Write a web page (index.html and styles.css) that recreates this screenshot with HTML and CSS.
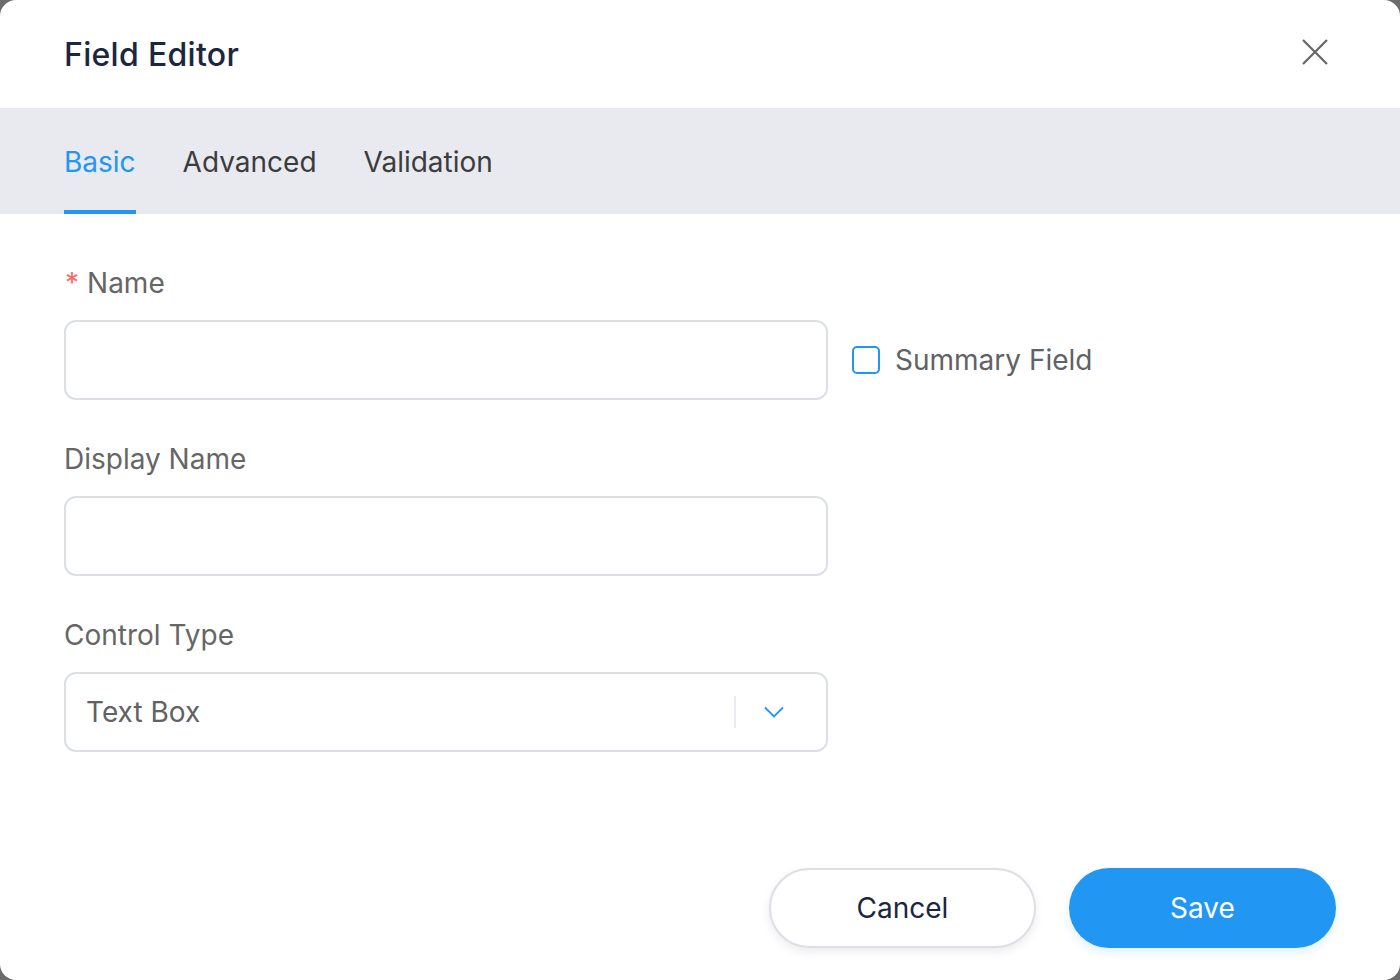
FILE: index.html
```html
<!DOCTYPE html>
<html lang="en">
<head>
    <meta charset="utf-8">
    <title>Field Editor</title>
    <link rel="stylesheet" href="styles.css">
</head>
<body>
    <div class="dialog">
        <div class="dialog-header">
            <h2 class="dialog-title">Field Editor</h2>
            <button class="close-btn" type="button" aria-label="Close">
                <svg width="26" height="26" viewBox="0 0 26 26">
                    <path d="M1 1 L25 25 M25 1 L1 25" stroke="#666" stroke-width="2.2" fill="none"/>
                </svg>
            </button>
        </div>
        <div class="tabs">
            <div class="tab active">Basic</div>
            <div class="tab">Advanced</div>
            <div class="tab">Validation</div>
        </div>
        <div class="dialog-body">
            <div class="form-item">
                <label class="form-label"><span class="required">*</span>Name</label>
                <div class="form-row">
                    <input class="input" type="text">
                    <label class="checkbox">
                        <span class="checkbox-box"></span>
                        <span>Summary Field</span>
                    </label>
                </div>
            </div>
            <div class="form-item">
                <label class="form-label">Display Name</label>
                <div class="form-row">
                    <input class="input" type="text">
                </div>
            </div>
            <div class="form-item">
                <label class="form-label">Control Type</label>
                <div class="form-row">
                    <div class="select">
                        <span class="select-value">Text Box</span>
                        <span class="select-divider"></span>
                        <span class="select-arrow">
                            <svg width="20" height="13" viewBox="0 0 20 13">
                                <path d="M1 1.5 L10 10.5 L19 1.5" stroke="#2196f3" stroke-width="1.8" fill="none"/>
                            </svg>
                        </span>
                    </div>
                </div>
            </div>
        </div>
        <div class="dialog-footer">
            <button class="btn btn-cancel" type="button">Cancel</button>
            <button class="btn btn-save" type="button">Save</button>
        </div>
    </div>
</body>
</html>
```

FILE: styles.css
```css
html, body {
    margin: 0;
    height: 100%;
}
body {
    background-color: #6b6b6b;
    font-family: Inter, "Noto Sans", "Liberation Sans", sans-serif;
}
.dialog {
    width: 1400px;
    height: 980px;
    background-color: #fff;
    border-radius: 16px;
    display: flex;
    flex-direction: column;
    overflow: hidden;
}
.dialog-header {
    height: 108px;
    display: flex;
    align-items: center;
    justify-content: space-between;
    padding: 0 72px 0 64px;
    box-sizing: border-box;
}
.dialog-title {
    margin: 0;
    font-size: 32px;
    font-weight: 500;
    color: #1b2640;
    letter-spacing: 0.3px;
}
.close-btn {
    border: none;
    background: none;
    padding: 0;
    width: 26px;
    height: 26px;
    margin-bottom: 4px;
    cursor: pointer;
}
.close-btn svg {
    display: block;
}
.tabs {
    height: 106px;
    background-color: #e8eaf0;
    display: flex;
    gap: 47px;
    padding: 0 64px;
}
.tab {
    font-size: 28px;
    color: #3c3c3c;
    display: flex;
    align-items: center;
    border-bottom: 4px solid transparent;
    padding-top: 6px;
}
.tab.active {
    color: #2196f3;
    border-bottom-color: #2196f3;
}
.dialog-body {
    padding: 48px 64px 0;
}
.form-item {
    margin-bottom: 38px;
}
.form-label {
    display: block;
    height: 40px;
    line-height: 42px;
    font-size: 28px;
    color: #666;
    margin-bottom: 18px;
}
.required {
    color: #f56c6c;
    margin-right: 8px;
    margin-left: 1px;
}
.form-row {
    display: flex;
    align-items: center;
    gap: 24px;
}
.input {
    width: 764px;
    height: 80px;
    box-sizing: border-box;
    border: 2px solid #dcdfe6;
    border-radius: 12px;
    font-size: 28px;
    padding: 0 22px;
    outline: none;
}
.checkbox {
    display: flex;
    align-items: center;
    gap: 15px;
    font-size: 28px;
    color: #606266;
}
.checkbox-box {
    width: 28px;
    height: 28px;
    box-sizing: border-box;
    border: 2px solid #2196f3;
    border-radius: 5px;
}
.select {
    width: 764px;
    height: 80px;
    box-sizing: border-box;
    border: 2px solid #dcdfe6;
    border-radius: 12px;
    display: flex;
    align-items: center;
    padding-left: 20px;
}
.select-value {
    flex: 1;
    font-size: 28px;
    color: #606266;
}
.select-divider {
    width: 2px;
    height: 32px;
    background-color: #e8ebf2;
}
.select-arrow {
    width: 76px;
    display: flex;
    justify-content: center;
    margin-right: 14px;
}
.select-arrow svg {
    display: block;
}
.dialog-footer {
    margin-top: auto;
    display: flex;
    justify-content: flex-end;
    gap: 33px;
    padding: 0 64px 32px;
}
.btn {
    width: 267px;
    height: 80px;
    border-radius: 40px;
    font-family: Inter, "Noto Sans", "Liberation Sans", sans-serif;
    font-size: 28px;
    cursor: pointer;
}
.btn-cancel {
    background-color: #fff;
    border: 2px solid #dcdfe6;
    color: #1b2640;
    box-shadow: 0 4px 10px rgba(0, 0, 0, 0.08);
}
.btn-save {
    background-color: #2196f3;
    border: none;
    color: #fff;
    box-shadow: 0 4px 10px rgba(33, 150, 243, 0.15);
}
```
